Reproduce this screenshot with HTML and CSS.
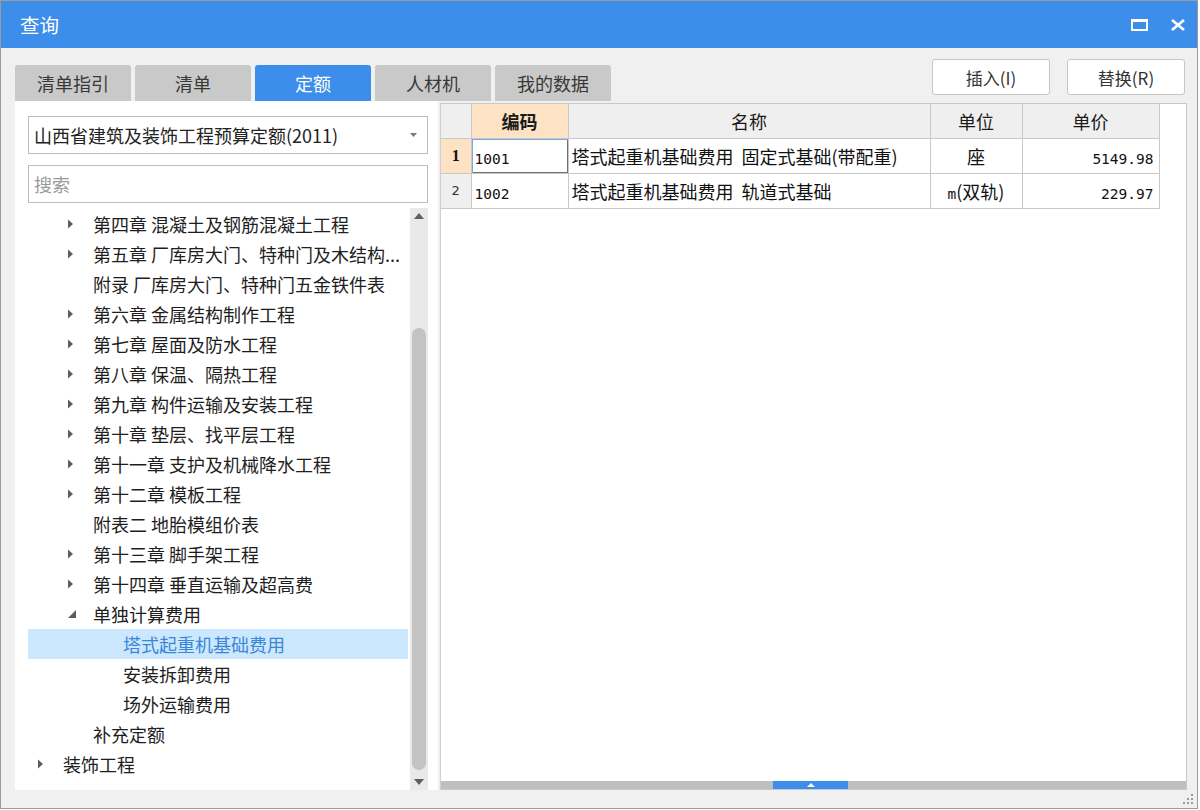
FILE: index.html
```html
<!DOCTYPE html>
<html lang="zh-CN">
<head>
<meta charset="utf-8">
<title>查询</title>
<link rel="stylesheet" href="styles.css">
</head>
<body>
<div class="window">
  <div class="titlebar">
    <span class="title">查询</span>
    <div class="win-btns">
      <span class="btn-max"></span>
      <svg class="btn-close" width="16" height="12" viewBox="0 0 16 12"><path d="M2 1 L14 11 M14 1 L2 11" stroke="#fff" stroke-width="2.6" fill="none"/></svg>
    </div>
  </div>
  <div class="toolbar">
    <div class="tabs">
      <div class="tab">清单指引</div>
      <div class="tab">清单</div>
      <div class="tab active">定额</div>
      <div class="tab">人材机</div>
      <div class="tab">我的数据</div>
    </div>
    <div class="actions">
      <button class="btn">插入(I)</button>
      <button class="btn">替换(R)</button>
    </div>
  </div>
  <div class="main">
    <div class="left">
      <div class="select">
        <span class="select-text">山西省建筑及装饰工程预算定额(2011)</span>
        <svg class="select-arrow" width="7" height="4" viewBox="0 0 7 4"><polygon points="0,0 7,0 3.5,4" fill="#7a7a7a"/></svg>
      </div>
      <div class="search">搜索</div>
      <div class="tree-wrap">
        <div class="tree">
          <div class="row l1"><svg class="tri" width="6" height="10" viewBox="0 0 6 10"><polygon points="0,0.5 5,5 0,9.5"/></svg><span class="label">第四章 混凝土及钢筋混凝土工程</span></div>
          <div class="row l1"><svg class="tri" width="6" height="10" viewBox="0 0 6 10"><polygon points="0,0.5 5,5 0,9.5"/></svg><span class="label">第五章 厂库房大门、特种门及木结构...</span></div>
          <div class="row l1"><span class="tri-space"></span><span class="label">附录 厂库房大门、特种门五金铁件表</span></div>
          <div class="row l1"><svg class="tri" width="6" height="10" viewBox="0 0 6 10"><polygon points="0,0.5 5,5 0,9.5"/></svg><span class="label">第六章 金属结构制作工程</span></div>
          <div class="row l1"><svg class="tri" width="6" height="10" viewBox="0 0 6 10"><polygon points="0,0.5 5,5 0,9.5"/></svg><span class="label">第七章 屋面及防水工程</span></div>
          <div class="row l1"><svg class="tri" width="6" height="10" viewBox="0 0 6 10"><polygon points="0,0.5 5,5 0,9.5"/></svg><span class="label">第八章 保温、隔热工程</span></div>
          <div class="row l1"><svg class="tri" width="6" height="10" viewBox="0 0 6 10"><polygon points="0,0.5 5,5 0,9.5"/></svg><span class="label">第九章 构件运输及安装工程</span></div>
          <div class="row l1"><svg class="tri" width="6" height="10" viewBox="0 0 6 10"><polygon points="0,0.5 5,5 0,9.5"/></svg><span class="label">第十章 垫层、找平层工程</span></div>
          <div class="row l1"><svg class="tri" width="6" height="10" viewBox="0 0 6 10"><polygon points="0,0.5 5,5 0,9.5"/></svg><span class="label">第十一章 支护及机械降水工程</span></div>
          <div class="row l1"><svg class="tri" width="6" height="10" viewBox="0 0 6 10"><polygon points="0,0.5 5,5 0,9.5"/></svg><span class="label">第十二章 模板工程</span></div>
          <div class="row l1"><span class="tri-space"></span><span class="label">附表二 地胎模组价表</span></div>
          <div class="row l1"><svg class="tri" width="6" height="10" viewBox="0 0 6 10"><polygon points="0,0.5 5,5 0,9.5"/></svg><span class="label">第十三章 脚手架工程</span></div>
          <div class="row l1"><svg class="tri" width="6" height="10" viewBox="0 0 6 10"><polygon points="0,0.5 5,5 0,9.5"/></svg><span class="label">第十四章 垂直运输及超高费</span></div>
          <div class="row l1"><svg class="tri open" width="9" height="8" viewBox="0 0 9 8"><polygon points="8,0 8,8 0,8"/></svg><span class="label">单独计算费用</span></div>
          <div class="row l2 selected"><span class="label">塔式起重机基础费用</span></div>
          <div class="row l2"><span class="label">安装拆卸费用</span></div>
          <div class="row l2"><span class="label">场外运输费用</span></div>
          <div class="row l1"><span class="tri-space"></span><span class="label">补充定额</span></div>
          <div class="row l0"><svg class="tri" width="6" height="10" viewBox="0 0 6 10"><polygon points="0,0.5 5,5 0,9.5"/></svg><span class="label">装饰工程</span></div>
        </div>
        <div class="vscroll">
          <div class="varrow"><svg width="10" height="6" viewBox="0 0 10 6"><polygon points="0,6 5,0 10,6" fill="#5f5f5f"/></svg></div>
          <div class="vtrack">
            <div class="vthumb"></div>
          </div>
          <div class="varrow"><svg width="10" height="6" viewBox="0 0 10 6"><polygon points="0,0 10,0 5,6" fill="#5f5f5f"/></svg></div>
        </div>
      </div>
    </div>
    <div class="right">
      <table class="grid">
        <colgroup>
          <col class="c-no"><col class="c-code"><col class="c-name"><col class="c-unit"><col class="c-price">
        </colgroup>
        <thead>
          <tr>
            <th class="corner"></th>
            <th class="hl">编码</th>
            <th>名称</th>
            <th>单位</th>
            <th>单价</th>
          </tr>
        </thead>
        <tbody>
          <tr>
            <td class="no hl"><b>1</b></td>
            <td class="code focus"><span class="num">1001</span></td>
            <td class="name">塔式起重机基础费用 固定式基础(带配重)</td>
            <td class="unit">座</td>
            <td class="price"><span class="num">5149.98</span></td>
          </tr>
          <tr>
            <td class="no">2</td>
            <td class="code"><span class="num">1002</span></td>
            <td class="name">塔式起重机基础费用 轨道式基础</td>
            <td class="unit"><span class="num">m</span>(双轨)</td>
            <td class="price"><span class="num">229.97</span></td>
          </tr>
        </tbody>
      </table>
      <div class="fill"></div>
      <div class="hscroll">
        <div class="hthumb"><svg width="8" height="4" viewBox="0 0 8 4"><polygon points="0,4 4,0 8,4" fill="#fff"/></svg></div>
      </div>
    </div>
  </div>
  <div class="status">
    <svg class="grip" width="12" height="12" viewBox="0 0 12 12" fill="#9a9a9a">
      <rect x="9" y="1" width="2" height="2"/>
      <rect x="5" y="5" width="2" height="2"/><rect x="9" y="5" width="2" height="2"/>
      <rect x="1" y="9" width="2" height="2"/><rect x="5" y="9" width="2" height="2"/><rect x="9" y="9" width="2" height="2"/>
    </svg>
  </div>
</div>
</body>
</html>
```

FILE: styles.css
```css
* { box-sizing: border-box; }
html, body { margin: 0; padding: 0; }
body {
  width: 1200px;
  height: 810px;
  overflow: hidden;
  background: #ffffff;
  font-family: "Noto Sans CJK SC", "Noto Sans", sans-serif;
  color: #222;
}
.window {
  width: 1198px;
  height: 809px;
  border: 1px solid #9b9b9b;
  background: #f0f0f0;
  display: flex;
  flex-direction: column;
}
.titlebar {
  height: 47px;
  flex: none;
  background: #3d8eea;
  display: flex;
  align-items: center;
  justify-content: space-between;
  padding: 0 11px 0 19px;
}
.title {
  color: #fff;
  font-size: 19.5px;
  line-height: 1;
}
.win-btns {
  display: flex;
  align-items: center;
  gap: 22px;
}
.btn-max {
  display: block;
  width: 17px;
  height: 12px;
  border: 2px solid #fff;
  border-top-width: 3px;
}
.btn-close { display: block; }

.toolbar {
  height: 53px;
  flex: none;
  display: flex;
  justify-content: space-between;
  padding: 0 12px 0 14px;
}
.tabs {
  align-self: flex-end;
  display: flex;
  gap: 4px;
}
.tab {
  width: 116px;
  height: 36px;
  line-height: 36px;
  text-align: center;
  font-size: 18px;
  color: #383838;
  background: #c9c9c9;
  border-radius: 3px 3px 0 0;
}
.tab.active {
  background: #3d8eea;
  color: #fff;
}
.actions {
  margin-top: 11px;
  display: flex;
  gap: 17px;
}
.btn {
  width: 118px;
  height: 36px;
  background: #fff;
  border: 1px solid #c6c6c6;
  border-radius: 3px;
  font-family: "Noto Sans CJK SC", "Noto Sans", sans-serif;
  font-size: 17px;
  color: #333;
  padding: 0;
}

.main {
  flex: 1;
  min-height: 0;
  display: flex;
  gap: 2px;
  padding: 0 10px 0 14px;
}
.left {
  width: 423px;
  flex: none;
  background: #fff;
  display: flex;
  flex-direction: column;
  padding: 15px 10px 0 13px;
}
.select {
  height: 38px;
  flex: none;
  border: 1px solid #bdbdbd;
  display: flex;
  align-items: center;
  justify-content: space-between;
  padding: 0 10px 0 5px;
  font-size: 18px;
  color: #222;
}
.select-text { white-space: nowrap; }
.search {
  margin-top: 11px;
  height: 38px;
  flex: none;
  border: 1px solid #bdbdbd;
  display: flex;
  align-items: center;
  padding-left: 5px;
  font-size: 18px;
  color: #9a9a9a;
}
.tree-wrap {
  margin-top: 5px;
  flex: 1;
  min-height: 0;
  display: flex;
}
.tree {
  width: 380px;
  flex: none;
  padding-top: 1px;
  overflow: hidden;
}
.row {
  height: 30px;
  display: flex;
  align-items: center;
  font-size: 18px;
  color: #1e1e1e;
  white-space: nowrap;
}
.row.l0 { padding-left: 10px; }
.row.l1 { padding-left: 40px; }
.row.l2 { padding-left: 95px; }
.tri {
  flex: none;
  fill: #5d5d5d;
  margin-right: 19px;
}
.tri.open { margin-right: 16px; }
.tri-space {
  flex: none;
  width: 25px;
}
.label {
  min-width: 0;
}
.row.selected {
  background: #cce8ff;
  color: #3a86d6;
}
.vscroll {
  width: 18px;
  flex: none;
  margin-left: 2px;
  background: #e9e9e9;
  display: flex;
  flex-direction: column;
}
.varrow {
  height: 16px;
  flex: none;
  display: flex;
  align-items: center;
  justify-content: center;
}
.varrow svg { display: block; }
.vtrack {
  flex: 1;
  display: flex;
  flex-direction: column;
  padding: 104px 2px 4px 2px;
}
.vthumb {
  flex: 1;
  background: #c3c3c3;
  border-radius: 7px;
}

.right {
  flex: 1;
  margin-top: 2px;
  background: #fff;
  border: 1px solid #c9c9c9;
  border-left-color: #cfcfcf;
  display: flex;
  flex-direction: column;
  min-width: 0;
}
.grid {
  border-collapse: collapse;
  table-layout: fixed;
  width: 718px;
  flex: none;
}
.c-no { width: 30px; }
.c-code { width: 97px; }
.c-name { width: 362px; }
.c-unit { width: 92px; }
.c-price { width: 137px; }
.grid th, .grid td {
  border: 1px solid #c8c8c8;
  padding: 0 3px;
  white-space: nowrap;
  overflow: hidden;
}
.grid tr > :first-child { border-left: none; }
.grid thead th { border-top: none; }
.grid th {
  height: 34px;
  background: #efefef;
  font-weight: normal;
  font-size: 18px;
  color: #1a1a1a;
  text-align: center;
}
.grid th.hl {
  background: #fde2c3;
  font-weight: 700;
  font-size: 18px;
}
.grid td {
  height: 35px;
  font-size: 18px;
  color: #111;
}
.grid td.name { word-spacing: 4px; }
.grid td.no {
  background: #efefef;
  text-align: center;
  font-family: "DejaVu Sans", sans-serif;
  font-size: 13px;
  color: #333;
}
.grid td.no.hl { background: #fde2c3; }
.grid td.no b {
  font-family: "Liberation Serif", serif;
  font-size: 16px;
  color: #111;
}
.num {
  font-family: "DejaVu Sans Mono", monospace;
  font-size: 14.5px;
}
.grid td.focus {
  box-shadow: inset 1px 1px 0 #79a9e6, inset -1px -1px 0 #6f6f6f;
}
.grid td.unit { text-align: center; }
.grid td.price { text-align: right; padding-right: 5px; }

.fill { flex: 1; }
.hscroll {
  height: 8px;
  flex: none;
  background: #bfbfbf;
  display: flex;
}
.hthumb {
  margin-left: 332px;
  width: 75px;
  background: #3d8eea;
  display: flex;
  align-items: flex-start;
  justify-content: center;
  padding-top: 2px;
}
.hthumb svg { display: block; }

.status {
  height: 18px;
  flex: none;
  display: flex;
  justify-content: flex-end;
  align-items: flex-end;
  padding: 0 3px 3px 0;
}
.grip { display: block; }
```
